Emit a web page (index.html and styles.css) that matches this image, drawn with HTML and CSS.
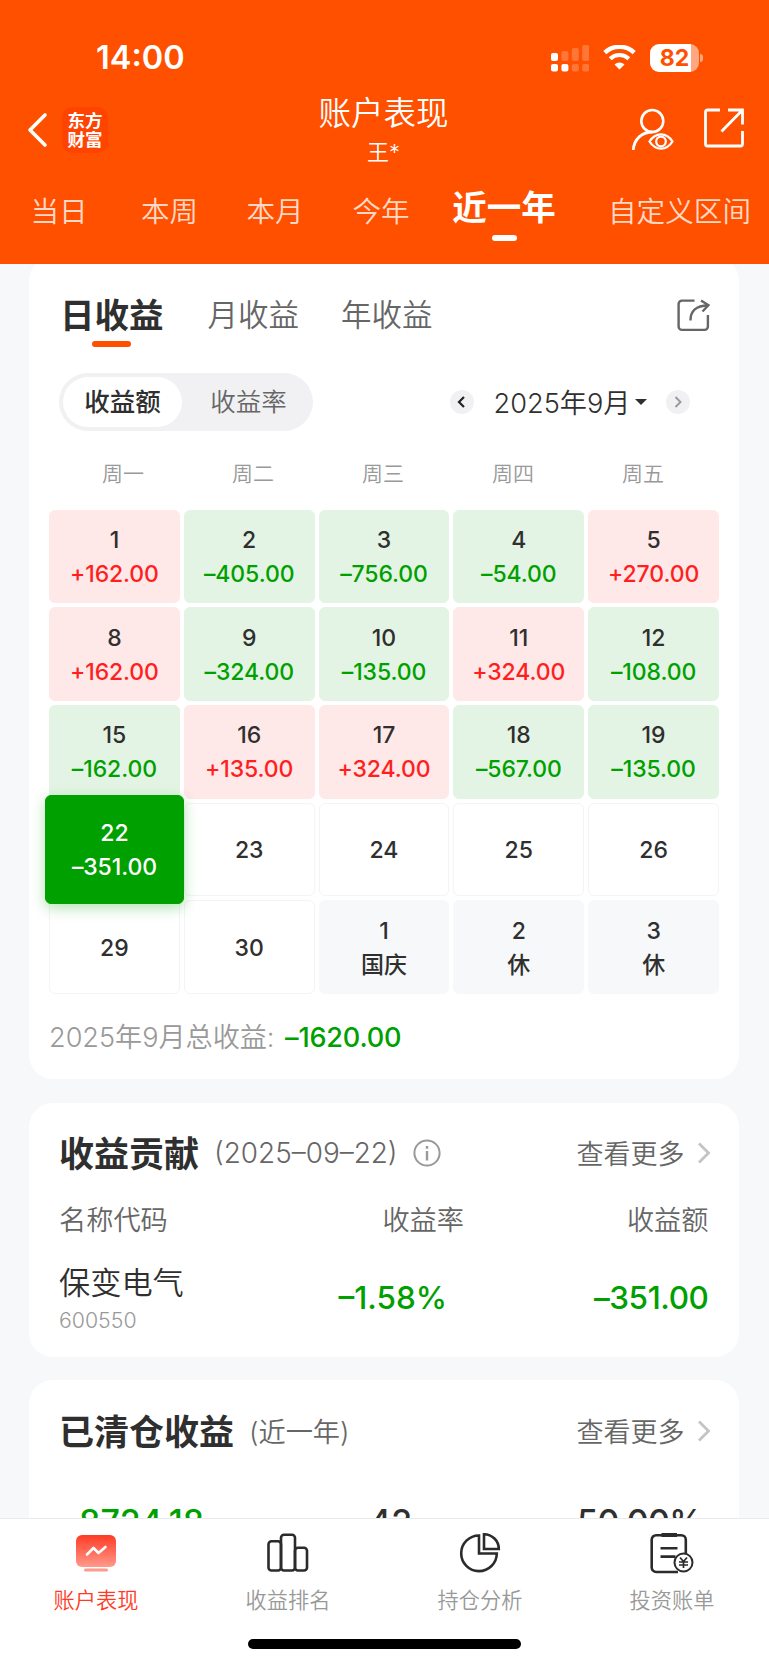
FILE: index.html
```html
<!DOCTYPE html>
<html lang="zh-CN">
<head>
  <meta charset="UTF-8">
  <meta name="viewport" content="width=device-width, initial-scale=1.0">
  <title>账户表现</title>
  <link rel="stylesheet" href="styles.css">
</head>
<body>
  <header class="header">
    <div class="status-bar">
      <span class="time">14:00</span>
      <svg class="signal" width="38" height="28" viewBox="0 0 38 28" fill="#fff">
        <rect x="0" y="9" width="7" height="8" rx="2"/>
        <rect x="0" y="20" width="7" height="7.5" rx="2"/>
        <rect x="10.4" y="20" width="7" height="7.5" rx="2"/>
        <g opacity=".22">
          <rect x="10.4" y="7" width="7" height="10" rx="2"/>
          <rect x="20.8" y="4" width="7" height="13" rx="2"/>
          <rect x="31.2" y="1" width="7" height="16" rx="2"/>
          <rect x="20.8" y="20" width="7" height="7.5" rx="2"/>
          <rect x="31.2" y="20" width="7" height="7.5" rx="2"/>
        </g>
      </svg>
      <svg class="wifi" width="33" height="25" viewBox="0 0 33 25" fill="none" stroke="#fff">
        <path d="M1.8 7.6a21.5 21.5 0 0 1 29.4 0" stroke-width="4.4"/>
        <path d="M7.2 13.7a13.6 13.6 0 0 1 18.6 0" stroke-width="4.2"/>
        <path d="M16.5 24.6l-5-5.2a7.4 7.4 0 0 1 10 0z" fill="#fff" stroke="none"/>
      </svg>
      <span class="battery"><span>82</span></span>
    </div>

    <div class="nav-bar">
      <svg class="back" width="21" height="36" viewBox="0 0 21 36" fill="none" stroke="#fff" stroke-width="3.6" stroke-linecap="round" stroke-linejoin="round">
        <path d="M18 3L3 18l15 15"/>
      </svg>
      <div class="logo">东方<br>财富</div>
      <div class="nav-title">
        <h1>账户表现</h1>
        <p>王*</p>
      </div>
      <svg class="user" width="43" height="43" viewBox="0 0 43 43" fill="none" stroke="#fff" stroke-width="2.6">
        <circle cx="21.3" cy="13" r="11"/>
        <path d="M2.3 42C3 31 11 24 21.5 24" stroke-width="2.8"/>
        <path d="M18.500 33.500c6-9.500 17-9.500 23 0c-6 9.500-17 9.500-23 0z" stroke-width="2.3"/>
        <circle cx="30" cy="33.500" r="4.800" stroke-width="2.2"/>
      </svg>
      <svg class="export" width="40" height="40" viewBox="0 0 40 40" fill="none" stroke="#fff" stroke-width="2.8">
        <path d="M16 2H3.500A2 2 0 0 0 1.500 4V36a2 2 0 0 0 2 2H36.500a2 2 0 0 0 2-2V23"/>
        <path d="M24 2h14.500v14.500M38 2.500L17.500 23.500"/>
      </svg>
    </div>

    <nav class="range-tabs">
      <a>当日</a>
      <a>本周</a>
      <a>本月</a>
      <a>今年</a>
      <a class="active">近一年</a>
      <a>自定义区间</a>
    </nav>
  </header>

  <main>
    <section class="card calendar">
      <div class="profit-tabs">
        <a class="active">日收益</a>
        <a>月收益</a>
        <a>年收益</a>
        <svg class="share" width="33" height="33" viewBox="0 0 33 33" fill="none" stroke="#666" stroke-width="2.4">
          <path d="M17.500 1.600H5a3.400 3.400 0 0 0-3.400 3.400V27.500a3.400 3.400 0 0 0 3.400 3.400H27.500a3.400 3.400 0 0 0 3.400-3.400V16"/>
          <path d="M13.500 21.500C13.500 12 19 6.500 31 6.500M24 1.500l7.500 4.700-6 6.300"/>
        </svg>
      </div>

      <div class="toolbar">
        <div class="segment">
          <span class="active">收益额</span>
          <span>收益率</span>
        </div>
        <div class="month">
          <span class="arrow">
            <svg width="24" height="24" viewBox="0 0 24 24" fill="none" stroke="#222" stroke-width="2.2"><path d="M14 7l-5 5 5 5"/></svg>
          </span>
          <span class="month-name">2025年9月</span>
          <span class="caret"></span>
          <span class="arrow">
            <svg width="24" height="24" viewBox="0 0 24 24" fill="none" stroke="#999" stroke-width="1.900"><path d="M9.500 7l5 5-5 5"/></svg>
          </span>
        </div>
      </div>

      <div class="week">
        <span>周一</span><span>周二</span><span>周三</span><span>周四</span><span>周五</span>
      </div>

      <div class="days">
        <div class="day up">1<b>+162.00</b></div>
        <div class="day down">2<b>–405.00</b></div>
        <div class="day down">3<b>–756.00</b></div>
        <div class="day down">4<b>–54.00</b></div>
        <div class="day up">5<b>+270.00</b></div>

        <div class="day up">8<b>+162.00</b></div>
        <div class="day down">9<b>–324.00</b></div>
        <div class="day down">10<b>–135.00</b></div>
        <div class="day up">11<b>+324.00</b></div>
        <div class="day down">12<b>–108.00</b></div>

        <div class="day down">15<b>–162.00</b></div>
        <div class="day up">16<b>+135.00</b></div>
        <div class="day up">17<b>+324.00</b></div>
        <div class="day down">18<b>–567.00</b></div>
        <div class="day down">19<b>–135.00</b></div>

        <div class="day selected">22<b>–351.00</b></div>
        <div class="day">23</div>
        <div class="day">24</div>
        <div class="day">25</div>
        <div class="day">26</div>

        <div class="day">29</div>
        <div class="day">30</div>
        <div class="day rest">1<b>国庆</b></div>
        <div class="day rest">2<b>休</b></div>
        <div class="day rest">3<b>休</b></div>
      </div>

      <p class="total">2025年9月总收益: <b>–1620.00</b></p>
    </section>

    <section class="card contribution">
      <div class="card-head">
        <h2>收益贡献</h2>
        <span class="sub date">(2025–09–22)</span>
        <svg class="info" width="28" height="28" viewBox="0 0 28 28" fill="none" stroke="#999" stroke-width="2">
          <circle cx="14" cy="14" r="12.600"/>
          <path d="M14 12v9.500M14 7v2.800" stroke-width="2.400"/>
        </svg>
        <a class="more">查看更多
          <svg width="14" height="22" viewBox="0 0 14 22" fill="none" stroke="#c4c4c4" stroke-width="2.800"><path d="M2 1.500l9.500 9.500L2 20.500"/></svg>
        </a>
      </div>
      <div class="row row-head">
        <span>名称代码</span>
        <span>收益率</span>
        <span>收益额</span>
      </div>
      <div class="row stock">
        <div>
          <p class="name">保变电气</p>
          <p class="code">600550</p>
        </div>
        <b class="rate">–1.58%</b>
        <b class="amount">–351.00</b>
      </div>
    </section>

    <section class="card cleared">
      <div class="card-head">
        <h2>已清仓收益</h2>
        <span class="sub">(近一年)</span>
        <a class="more">查看更多
          <svg width="14" height="22" viewBox="0 0 14 22" fill="none" stroke="#c4c4c4" stroke-width="2.800"><path d="M2 1.500l9.500 9.500L2 20.500"/></svg>
        </a>
      </div>
      <div class="figures">
        <b class="green">–8724.18</b>
        <b>42</b>
        <b class="win">50.00%</b>
      </div>
    </section>
  </main>

  <footer class="tab-bar">
    <a class="active">
      <svg width="44" height="44" viewBox="0 0 44 44">
        <defs>
          <linearGradient id="screen" x1="0" y1="0" x2="0" y2="1">
            <stop offset="0" stop-color="#ff3b24"/>
            <stop offset="1" stop-color="#ff9a8c"/>
          </linearGradient>
        </defs>
        <rect x="2" y="4" width="40" height="32" rx="6" fill="url(#screen)"/>
        <rect x="10" y="37.500" width="24" height="3" rx="1.500" fill="#ff9a8c"/>
        <path d="M13 23.500l6.500-6.500 5 5L31.500 16" fill="none" stroke="#fff" stroke-width="2.600" stroke-linecap="round" stroke-linejoin="round"/>
      </svg>
      账户表现
    </a>
    <a>
      <svg width="44" height="44" viewBox="0 0 44 44" fill="none" stroke="#2b2b2b" stroke-width="2.600">
        <rect x="2.500" y="10.200" width="12.500" height="29.300" rx="3"/>
        <rect x="15" y="3.700" width="14" height="35.800" rx="3"/>
        <rect x="29" y="16.700" width="12" height="22.800" rx="3"/>
      </svg>
      收益排名
    </a>
    <a>
      <svg width="44" height="44" viewBox="0 0 44 44" fill="none" stroke="#2b2b2b" stroke-width="2.600">
        <path d="M21 4.500A17.800 17.800 0 1 0 38.800 22.500H21z"/>
        <path d="M26 3.200A14.800 14.800 0 0 1 40.800 18H26z"/>
      </svg>
      持仓分析
    </a>
    <a>
      <svg width="44" height="44" viewBox="0 0 44 44" fill="none" stroke="#2b2b2b" stroke-width="2.600">
        <path d="M35.800 22.500V8.700a4.500 4.500 0 0 0-4.500-4.500H6.200a4.500 4.500 0 0 0-4.500 4.500V36.500a4.500 4.500 0 0 0 4.500 4.500H28"/>
        <path d="M11.500 4h15.500" stroke-width="4"/>
        <path d="M10.500 17.300h17M10.500 25.600h15"/>
        <circle cx="33.500" cy="31.500" r="9" stroke-width="2"/>
        <path d="M30 26.500l3.500 4 3.500-4M33.500 30.500v6.500M29 31h9M29 34h9" stroke-width="1.700"/>
      </svg>
      投资账单
    </a>
    <span class="home-indicator"></span>
  </footer>
</body>
</html>
```

FILE: styles.css
```css
/* General */
* {
  box-sizing: border-box;
}

body {
  margin: 0;
  height: 1665px;
  overflow: hidden;
  display: flex;
  flex-direction: column;
  background: #f7f8fa;
  color: #2f2f2f;
  font-family: Inter, "Noto Sans CJK SC", sans-serif;
  font-weight: 350;
}

h1, h2, p {
  margin: 0;
}

svg {
  display: block;
  flex: none;
}

/* Header */
.header {
  height: 264px;
  flex: none;
  background: #ff5000;
  color: #fff;
  position: relative;
}

.status-bar {
  display: flex;
  align-items: center;
  height: 90px;
  padding: 25px 65px 0 96px;
}

.time {
  font-size: 32.500px;
  font-weight: 600;
  line-height: 40px;
  padding-top: 1px;
}

.signal {
  margin-left: auto;
}

.wifi {
  margin: 0 14px;
}

.battery {
  width: 49px;
  height: 28px;
  border-radius: 9px;
  background: linear-gradient(to right, #fff 41px, #ffa77f 41px);
  color: #ff5000;
  font-size: 23px;
  font-weight: 700;
  line-height: 28px;
  text-align: center;
  margin-right: 5px;
  position: relative;
}

.battery::after {
  content: "";
  position: absolute;
  right: -4px;
  top: 10px;
  width: 3px;
  height: 8px;
  border-radius: 0 3px 3px 0;
  background: #ffa77f;
}

.nav-bar {
  display: flex;
  align-items: center;
  height: 79px;
  padding: 0 25px 0 27px;
}

.logo {
  width: 46px;
  height: 46px;
  margin-left: 14px;
  border-radius: 10px;
  background: #ff4300;
  font-family: "Noto Sans CJK SC", sans-serif;
  font-size: 17.500px;
  font-weight: 700;
  line-height: 19.500px;
  padding-top: 3px;
  text-align: center;
}

.nav-title {
  flex: 1;
  text-align: center;
  padding-left: 28px;
}

.nav-title h1 {
  font-size: 32.500px;
  font-weight: 350;
  line-height: 44px;
}

.nav-title p {
  font-size: 22px;
  line-height: 32px;
}

.export {
  margin-left: 30px;
  margin-bottom: 3px;
}

.range-tabs {
  display: grid;
  grid-template-columns: 118px 103px 108px 104px 142px 209px;
  height: 84px;
  line-height: 86px;
  text-align: center;
  font-size: 28.600px;
  overflow: hidden;
}

.range-tabs a {
  color: #ffd9c6;
  position: relative;
}

.range-tabs .active {
  color: #fff;
  font-size: 34.500px;
  font-weight: 600;
  line-height: 77px;
}

.range-tabs .active::after {
  content: "";
  position: absolute;
  left: 59px;
  top: 66px;
  width: 25px;
  height: 6px;
  border-radius: 3px;
  background: #fff;
}

/* Cards */
.card {
  width: 709.500px;
  margin: 0 0 23px 29px;
  background: #fff;
  border-radius: 24px;
}

.calendar {
  height: 822px;
  margin-top: -7px;
  margin-bottom: 24px;
  padding: 7px 20px 0;
}

.profit-tabs {
  display: flex;
  align-items: center;
  height: 102px;
  padding-left: 11px;
  font-size: 30.500px;
  color: #666;
}

.profit-tabs a {
  margin-right: 42px;
  margin-bottom: 4px;
}

.profit-tabs .active {
  margin-right: 44px;
  color: #2f2f2f;
  font-size: 34.500px;
  font-weight: 600;
  position: relative;
}

.profit-tabs .active::after {
  content: "";
  position: absolute;
  left: 32px;
  bottom: -9px;
  width: 39px;
  height: 6px;
  border-radius: 3px;
  background: #ff5000;
}

.share {
  margin-left: auto;
  margin-right: 9px;
}

.toolbar {
  display: flex;
  justify-content: space-between;
  align-items: center;
  margin-top: 7px;
  padding: 0 29px 0 10px;
}

.segment {
  display: flex;
  width: 254px;
  height: 58px;
  padding: 4px;
  border-radius: 29px;
  background: #f1f1f4;
  font-size: 25.500px;
  line-height: 50px;
  text-align: center;
  color: #666;
}

.segment span {
  width: 127px;
  padding-left: 6px;
}

.segment .active {
  width: 119px;
  height: 50px;
  padding: 0;
  border-radius: 25px;
  background: #fff;
  color: #2f2f2f;
  font-weight: 500;
}

.month {
  display: flex;
  align-items: center;
}

.arrow {
  width: 24px;
  height: 24px;
  border-radius: 50%;
  background: #f1f1f4;
}

.month-name {
  margin-left: 19px;
  margin-bottom: 2px;
  font-size: 27.200px;
  white-space: nowrap;
}

.caret {
  margin: 0 19px 0 4px;
  border: 6px solid transparent;
  border-top-color: #2f2f2f;
  border-bottom: 0;
}

.week {
  display: grid;
  grid-template-columns: repeat(5, 130px);
  padding-left: 9px;
  margin-top: 27px;
  line-height: 32px;
  font-size: 21px;
  text-align: center;
  color: #999;
}

.days {
  display: grid;
  grid-template-columns: repeat(5, 130.800px);
  grid-auto-rows: 93.700px;
  gap: 4px;
  margin-top: 19.500px;
}

.day {
  display: flex;
  flex-direction: column;
  justify-content: center;
  align-items: center;
  padding-top: 1px;
  border: 1px solid #f4f4f6;
  border-radius: 6px;
  font-size: 23px;
  font-weight: 500;
  line-height: 34px;
}

.day b {
  font-weight: 500;
  letter-spacing: -0.1px;
}

.up {
  background: #fee8e8;
  border-color: #fee8e8;
}

.up b {
  color: #ff1f1f;
}

.down {
  background: #e4f4e4;
  border-color: #e4f4e4;
}

.down b,
.green {
  color: #00a000;
}

.rest {
  background: #f7f8fa;
  border-color: #f7f8fa;
}

.selected {
  margin: -8px -4px;
  background: #00a000;
  border-color: #00a000;
  color: #fff;
  box-shadow: 0 4px 14px rgba(0, 160, 0, 0.3);
  position: relative;
}

.total {
  margin-top: 23px;
  font-size: 27.100px;
  line-height: 42px;
  color: #999;
}

.total b {
  margin-left: 3px;
  color: #00a000;
  font-weight: 500;
  letter-spacing: -0.2px;
}

.card-head {
  display: flex;
  align-items: center;
  height: 52px;
}

.card-head h2 {
  margin-bottom: 4px;
  font-size: 35px;
  font-weight: 600;
}

.sub {
  margin-left: 15px;
  margin-bottom: 2px;
  font-size: 27.200px;
  color: #666;
}

.date {
  font-size: 27.900px;
  margin-bottom: 0;
}

.info {
  margin-left: 15px;
}

.more {
  display: flex;
  align-items: center;
  gap: 12px;
  margin-left: auto;
  margin-bottom: 1px;
  font-size: 27px;
  color: #666;
}

.contribution {
  height: 254px;
  padding: 24px 28px 0 30px;
}

.row {
  display: grid;
  grid-template-columns: 1fr 200px 244.500px;
  padding-right: 2px;
  text-align: right;
}

.row > :first-child {
  text-align: left;
}

.row-head {
  margin-top: 22px;
  font-size: 27.200px;
  line-height: 40px;
  color: #666;
}

.stock {
  margin-top: 19px;
}

.stock b {
  color: #00a000;
  font-size: 31.500px;
  font-weight: 500;
  line-height: 75px;
}

.stock .rate {
  padding-right: 17px;
}

.stock .amount {
  letter-spacing: -0.4px;
}

.name {
  font-size: 31.200px;
  line-height: 46px;
}

.code {
  font-size: 21.300px;
  line-height: 29px;
  color: #999;
}

.cleared {
  flex: none;
  padding: 25px 36px 0 30px;
}

.cleared .card-head {
  margin-right: -8px;
}

.figures {
  display: flex;
  justify-content: space-between;
  margin-top: 35px;
  padding-left: 3px;
  font-size: 34px;
  line-height: 60px;
}

.figures b {
  font-weight: 500;
}

.figures .win {
  letter-spacing: -0.6px;
}

/* Bottom tab bar */
.tab-bar {
  position: absolute;
  left: 0;
  top: 1518px;
  width: 769px;
  height: 147px;
  display: grid;
  grid-template-columns: repeat(4, 192px);
  background: #fff;
  border-top: 1px solid #e9eaec;
}

.tab-bar a {
  display: flex;
  flex-direction: column;
  align-items: center;
  padding-top: 12px;
  font-size: 21.200px;
  line-height: 32px;
  color: #999;
}

.tab-bar svg {
  margin-bottom: 9px;
}

.tab-bar .active {
  color: #ff3b24;
}

.home-indicator {
  position: absolute;
  left: 248px;
  top: 120px;
  width: 273px;
  height: 10px;
  border-radius: 5px;
  background: #000;
}
```
